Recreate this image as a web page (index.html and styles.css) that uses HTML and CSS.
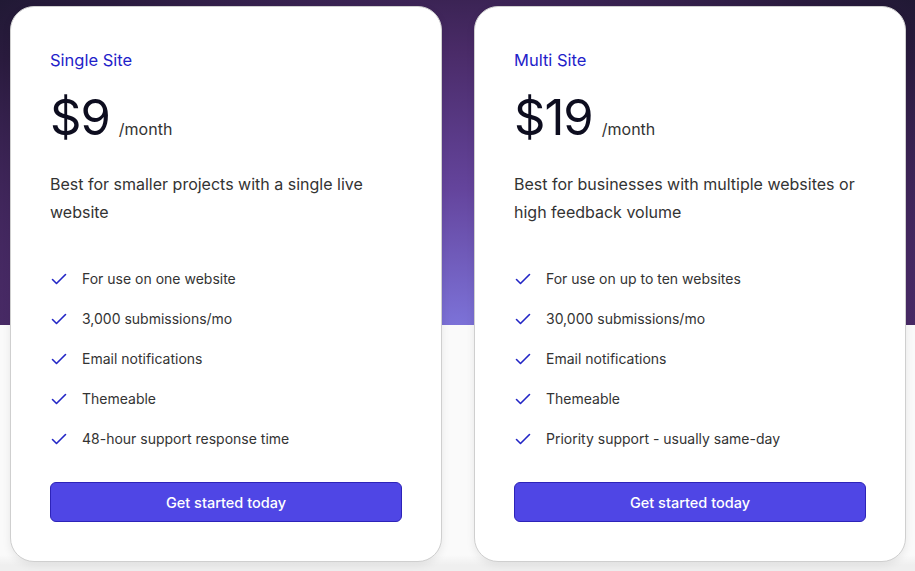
FILE: index.html
```html
<!DOCTYPE html>
<html lang="en">
<head>
    <meta charset="UTF-8">
    <meta name="viewport" content="width=device-width, initial-scale=1.0">
    <title>Pricing</title>
    <link rel="stylesheet" href="styles.css">
</head>
<body>
    <div class="page">
        <div class="plans">

            <div class="plan">
                <h2 class="plan-name">Single Site</h2>
                <div class="price">
                    <span class="amount">$9</span>
                    <span class="period">/month</span>
                </div>
                <p class="desc">Best for smaller projects with a single live website</p>
                <ul class="features">
                    <li><svg class="check" viewBox="0 0 16 16"><path d="M1.5 8.5 L5.5 12.5 L14.5 3.5"/></svg>For use on one website</li>
                    <li><svg class="check" viewBox="0 0 16 16"><path d="M1.5 8.5 L5.5 12.5 L14.5 3.5"/></svg>3,000 submissions/mo</li>
                    <li><svg class="check" viewBox="0 0 16 16"><path d="M1.5 8.5 L5.5 12.5 L14.5 3.5"/></svg>Email notifications</li>
                    <li><svg class="check" viewBox="0 0 16 16"><path d="M1.5 8.5 L5.5 12.5 L14.5 3.5"/></svg>Themeable</li>
                    <li><svg class="check" viewBox="0 0 16 16"><path d="M1.5 8.5 L5.5 12.5 L14.5 3.5"/></svg>48-hour support response time</li>
                </ul>
                <button class="cta">Get started today</button>
            </div>

            <div class="plan">
                <h2 class="plan-name">Multi Site</h2>
                <div class="price">
                    <span class="amount">$19</span>
                    <span class="period">/month</span>
                </div>
                <p class="desc">Best for businesses with multiple websites or high feedback volume</p>
                <ul class="features">
                    <li><svg class="check" viewBox="0 0 16 16"><path d="M1.5 8.5 L5.5 12.5 L14.5 3.5"/></svg>For use on up to ten websites</li>
                    <li><svg class="check" viewBox="0 0 16 16"><path d="M1.5 8.5 L5.5 12.5 L14.5 3.5"/></svg>30,000 submissions/mo</li>
                    <li><svg class="check" viewBox="0 0 16 16"><path d="M1.5 8.5 L5.5 12.5 L14.5 3.5"/></svg>Email notifications</li>
                    <li><svg class="check" viewBox="0 0 16 16"><path d="M1.5 8.5 L5.5 12.5 L14.5 3.5"/></svg>Themeable</li>
                    <li><svg class="check" viewBox="0 0 16 16"><path d="M1.5 8.5 L5.5 12.5 L14.5 3.5"/></svg>Priority support - usually same-day</li>
                </ul>
                <button class="cta">Get started today</button>
            </div>

        </div>
    </div>
</body>
</html>
```

FILE: styles.css
```css
* {
    margin: 0;
    padding: 0;
    box-sizing: border-box;
}

body {
    font-family: Inter, "Noto Sans", Arial, sans-serif;
    background: #f1f1f1;
    overflow: hidden;
}

/* top band: purple glow, light below */
.page {
    min-height: 571px;
    padding: 6px 9px 0 10px;
    background:
        radial-gradient(ellipse 80% 140% at 50% 100%, #7c72d8 0%, #64449c 30%, #4a2b68 60%, #2a1b3e 85%, #1c1830 100%) top / 100% 325px no-repeat,
        linear-gradient(#fafafa, #fafafa 555px, #efefef 565px);
}

.plans {
    display: flex;
    gap: 32px;
}

.plan {
    width: 432px;
    height: 556px;
    background: #fff;
    border: 1px solid #cfcfcf;
    border-radius: 24px;
    padding: 41px 39px 0;
    box-shadow: 0 3px 8px rgba(0, 0, 0, 0.08);
}

.plan-name {
    font-size: 16.5px;
    font-weight: 400;
    line-height: 24px;
    color: #1f22c9;
}

.price {
    display: flex;
    align-items: baseline;
    margin-top: 16px;
    height: 60px;
    color: #0d0d1f;
}

.amount {
    font-size: 49px;
    line-height: 60px;
    letter-spacing: -1px;
}

.period {
    font-size: 16px;
    color: #333;
    margin-left: 9px;
}

.desc {
    margin-top: 22px;
    font-size: 16px;
    line-height: 28px;
    color: #333;
}

.features {
    list-style: none;
    margin-top: 43px;
    display: flex;
    flex-direction: column;
    gap: 20px;
}

.features li {
    display: flex;
    align-items: center;
    font-size: 14px;
    line-height: 20px;
    color: #333;
}

.check {
    width: 16px;
    height: 16px;
    margin: 0 15px 0 1px;
    fill: none;
    stroke: #2326c6;
    stroke-width: 1.6;
    stroke-linecap: round;
    stroke-linejoin: round;
}

.cta {
    display: block;
    width: 100%;
    height: 40px;
    margin-top: 33px;
    background: #4f46e5;
    border: 1px solid #2d23b8;
    border-radius: 6px;
    color: #fff;
    font-family: inherit;
    font-size: 14.5px;
    font-weight: 500;
    cursor: pointer;
}
```
